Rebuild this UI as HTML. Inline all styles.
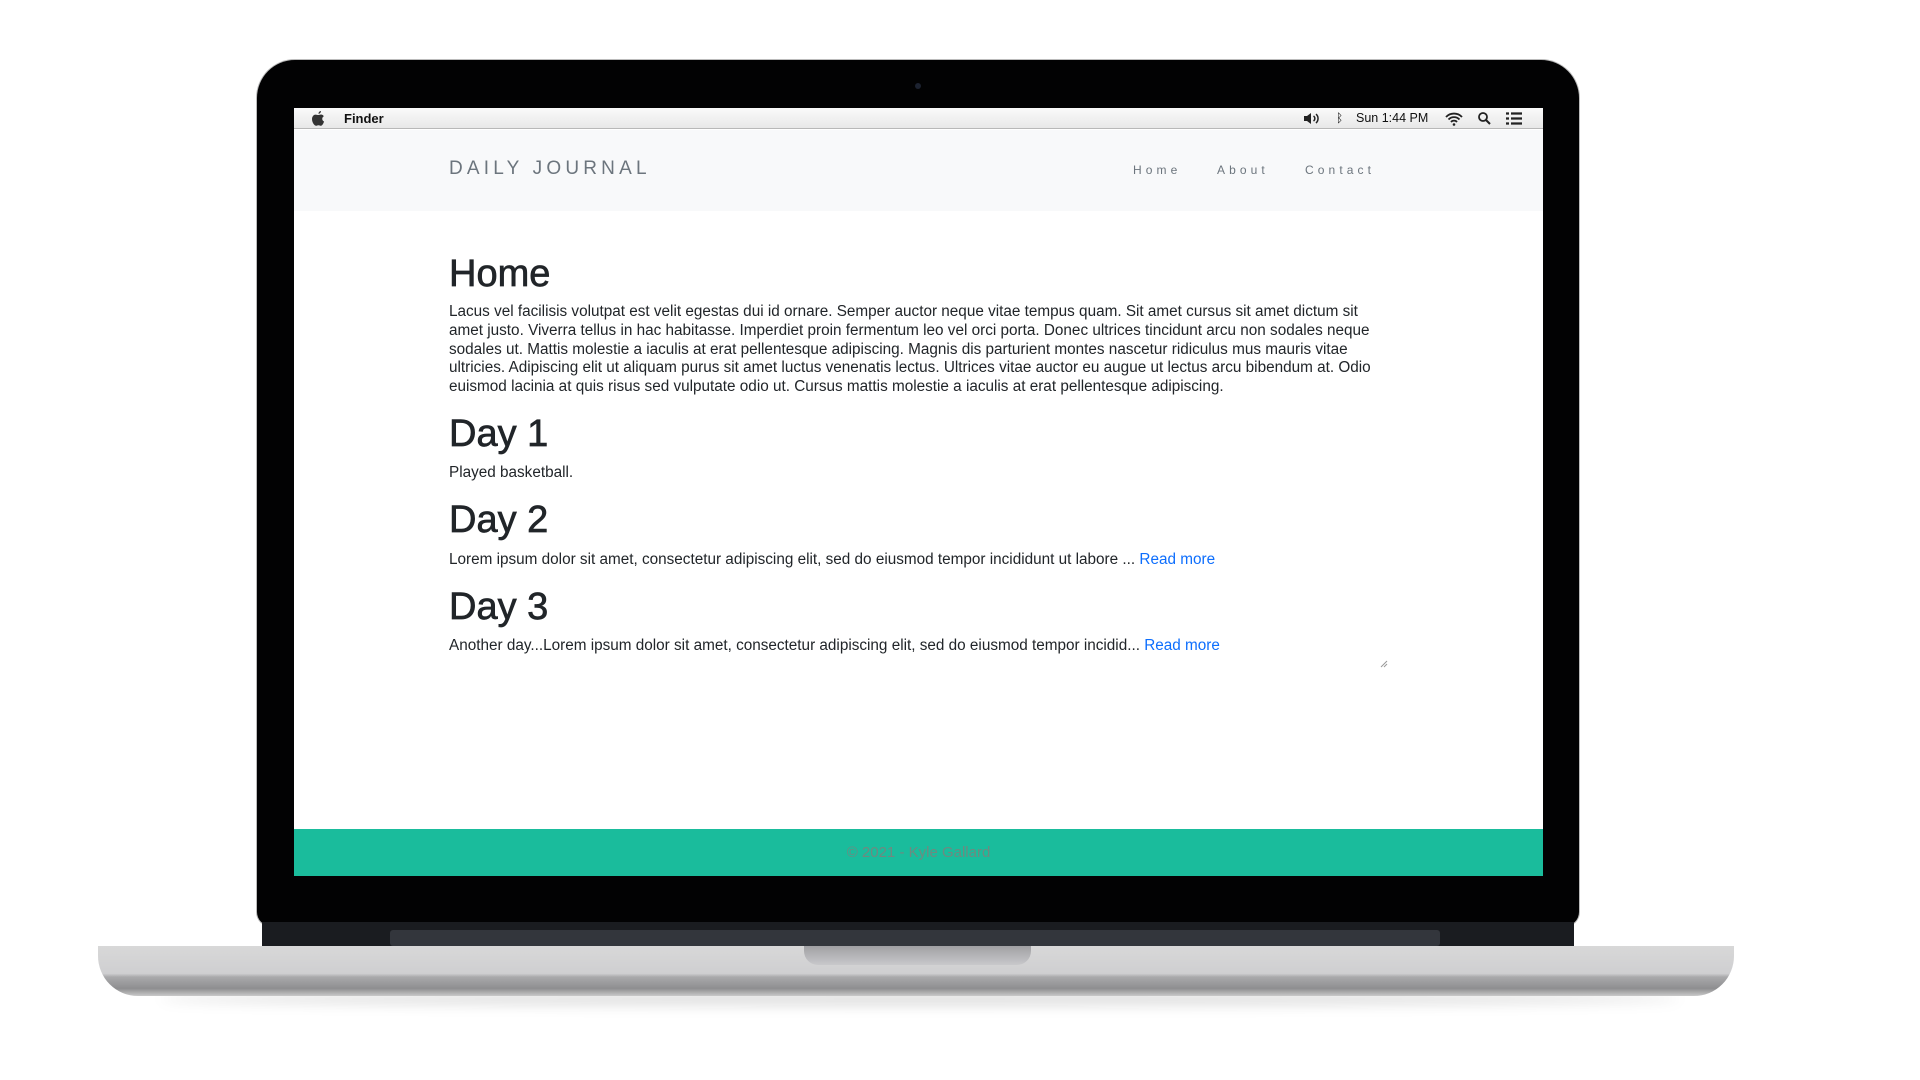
<!DOCTYPE html>
<html><head><meta charset="utf-8"><style>
*{margin:0;padding:0;box-sizing:border-box}
body{width:1920px;height:1080px;background:#fff;position:relative;overflow:hidden;font-family:"Liberation Sans",sans-serif}
.abs{position:absolute}
.bezel{left:257px;top:60px;width:1322px;height:866px;background:#020203;border-radius:38px 38px 14px 14px;box-shadow:0 0 0 1px #bbb}
.hinge{left:262px;top:922px;width:1312px;height:26px;background:#1a1c20}
.hinge2{left:390px;top:930px;width:1050px;height:16px;background:#33363c;border-radius:3px}
.base{left:98px;top:946px;width:1636px;height:50px;background:linear-gradient(#d8d8d8 0,#cfcfd1 55%,#a9a9ab 62%,#8e8e90 85%,#c9c9c9 100%);border-radius:0 0 40px 40px}
.notch{left:804px;top:946px;width:227px;height:19px;background:linear-gradient(#a0a0a3,#c8c8cb);border-radius:0 0 14px 14px}
.shadow{left:160px;top:992px;width:1520px;height:14px;background:rgba(0,0,0,.12);filter:blur(6px);border-radius:50%}
.screen{left:294px;top:108px;width:1249px;height:768px;background:#fff;overflow:hidden}
.menubar{left:0;top:0;width:100%;height:21px;background:linear-gradient(#fafafa,#e8e8e8);border-bottom:1px solid #b8b8b8;font-size:13px;color:#111}
.nav{left:0;top:22px;width:100%;height:81px;background:#f8f9fa}
.brand{left:155px;top:28px;font-size:19px;letter-spacing:4.2px;color:#6c757d}
.nl{top:33px;font-size:12px;letter-spacing:4.1px;color:#6c757d}
h1{font-weight:normal;-webkit-text-stroke:0.7px #212529;font-size:38px;position:absolute;left:155px;color:#212529;line-height:1}
.p{position:absolute;left:155px;font-size:15.3px;line-height:18.8px;color:#212529;white-space:nowrap}
a{color:#0d6efd;text-decoration:none}
.footer{left:0;top:721px;width:100%;height:47px;background:#1abc9c;text-align:center;font-size:15px;color:#6e8a80;line-height:47px}
</style></head><body>
<div class="abs shadow"></div>
<div class="abs bezel"></div>
<div class="abs hinge"></div>
<div class="abs hinge2"></div>
<div class="abs base"></div>
<div class="abs notch"></div>
<div class="abs" style="left:915px;top:83px;width:6px;height:6px;border-radius:50%;background:#1c2230"></div>
<div class="abs screen">
  <div class="abs menubar">
    <svg class="abs" style="left:18px;top:3px" width="13" height="15" viewBox="0 0 13 15"><path d="M9 0c0 1.5-1.2 2.8-2.5 2.8C6.4 1.4 7.6 0.1 9 0zM6.5 4c.8 0 1.5-.5 2.5-.5 1.2 0 2.3.7 2.8 1.7-2.3 1.3-1.9 4.4.3 5.3-.6 1.6-1.8 4.3-3.2 4.3-.9 0-1.3-.6-2.4-.6s-1.6.6-2.4.6C2.5 14.8 0 11.5 0 8.1 0 5.3 1.8 3.6 3.6 3.6c1.1 0 2 .4 2.9.4z" fill="#333"/></svg>
    <span class="abs" style="left:50px;top:3px;font-weight:bold">Finder</span>
    <svg class="abs" style="left:1009px;top:4px" width="18" height="13" viewBox="0 0 18 13"><path d="M1 4h3l4-3v11l-4-3H1z" fill="#222"/><path d="M10.5 4a3 3 0 0 1 0 5M13 2a6 6 0 0 1 0 9" stroke="#222" stroke-width="1.5" fill="none"/></svg>
    <span class="abs" style="left:1042px;top:3px;font-size:12px">ᛒ</span>
    <span class="abs" style="left:1062px;top:3px;font-size:12.5px">Sun 1:44 PM</span>
    <svg class="abs" style="left:1151px;top:4px" width="18" height="14" viewBox="0 0 18 14"><path d="M1 5a11 11 0 0 1 16 0M3.5 7.5a7.5 7.5 0 0 1 11 0M6 10a4 4 0 0 1 6 0" stroke="#222" stroke-width="1.8" fill="none"/><circle cx="9" cy="12.5" r="1.3" fill="#222"/></svg>
    <svg class="abs" style="left:1184px;top:4px" width="13" height="13" viewBox="0 0 13 13"><circle cx="5" cy="5" r="4" stroke="#222" stroke-width="1.8" fill="none"/><path d="M8 8l4 4" stroke="#222" stroke-width="2"/></svg>
    <svg class="abs" style="left:1212px;top:4px" width="16" height="13" viewBox="0 0 16 13"><path d="M0 1.5h3M0 6.5h3M0 11.5h3M5 1.5h11M5 6.5h11M5 11.5h11" stroke="#222" stroke-width="2.2"/></svg>
  </div>
  <div class="abs nav">
    <div class="abs brand">DAILY JOURNAL</div>
    <div class="abs nl" style="left:839px">Home</div>
    <div class="abs nl" style="left:923px">About</div>
    <div class="abs nl" style="left:1011px">Contact</div>
  </div>
  <h1 style="top:147px">Home</h1>
  <div class="p" style="top:195px">Lacus vel facilisis volutpat est velit egestas dui id ornare. Semper auctor neque vitae tempus quam. Sit amet cursus sit amet dictum sit<br>amet justo. Viverra tellus in hac habitasse. Imperdiet proin fermentum leo vel orci porta. Donec ultrices tincidunt arcu non sodales neque<br>sodales ut. Mattis molestie a iaculis at erat pellentesque adipiscing. Magnis dis parturient montes nascetur ridiculus mus mauris vitae<br>ultricies. Adipiscing elit ut aliquam purus sit amet luctus venenatis lectus. Ultrices vitae auctor eu augue ut lectus arcu bibendum at. Odio<br>euismod lacinia at quis risus sed vulputate odio ut. Cursus mattis molestie a iaculis at erat pellentesque adipiscing.</div>
  <h1 style="top:307px">Day 1</h1>
  <div class="p" style="top:356px">Played basketball.</div>
  <h1 style="top:393px">Day 2</h1>
  <div class="p" style="top:443px">Lorem ipsum dolor sit amet, consectetur adipiscing elit, sed do eiusmod tempor incididunt ut labore ... <a>Read more</a></div>
  <h1 style="top:480px">Day 3</h1>
  <div class="p" style="top:529px">Another day...Lorem ipsum dolor sit amet, consectetur adipiscing elit, sed do eiusmod tempor incidid... <a>Read more</a></div>
  <svg class="abs" style="left:1086px;top:552px" width="8" height="8" viewBox="0 0 8 8"><path d="M1 7L7 1M4 7L7 4" stroke="#999" stroke-width="1"/></svg>
  <div class="abs footer">© 2021 - Kyle Gallard</div>
</div>
</body></html>
